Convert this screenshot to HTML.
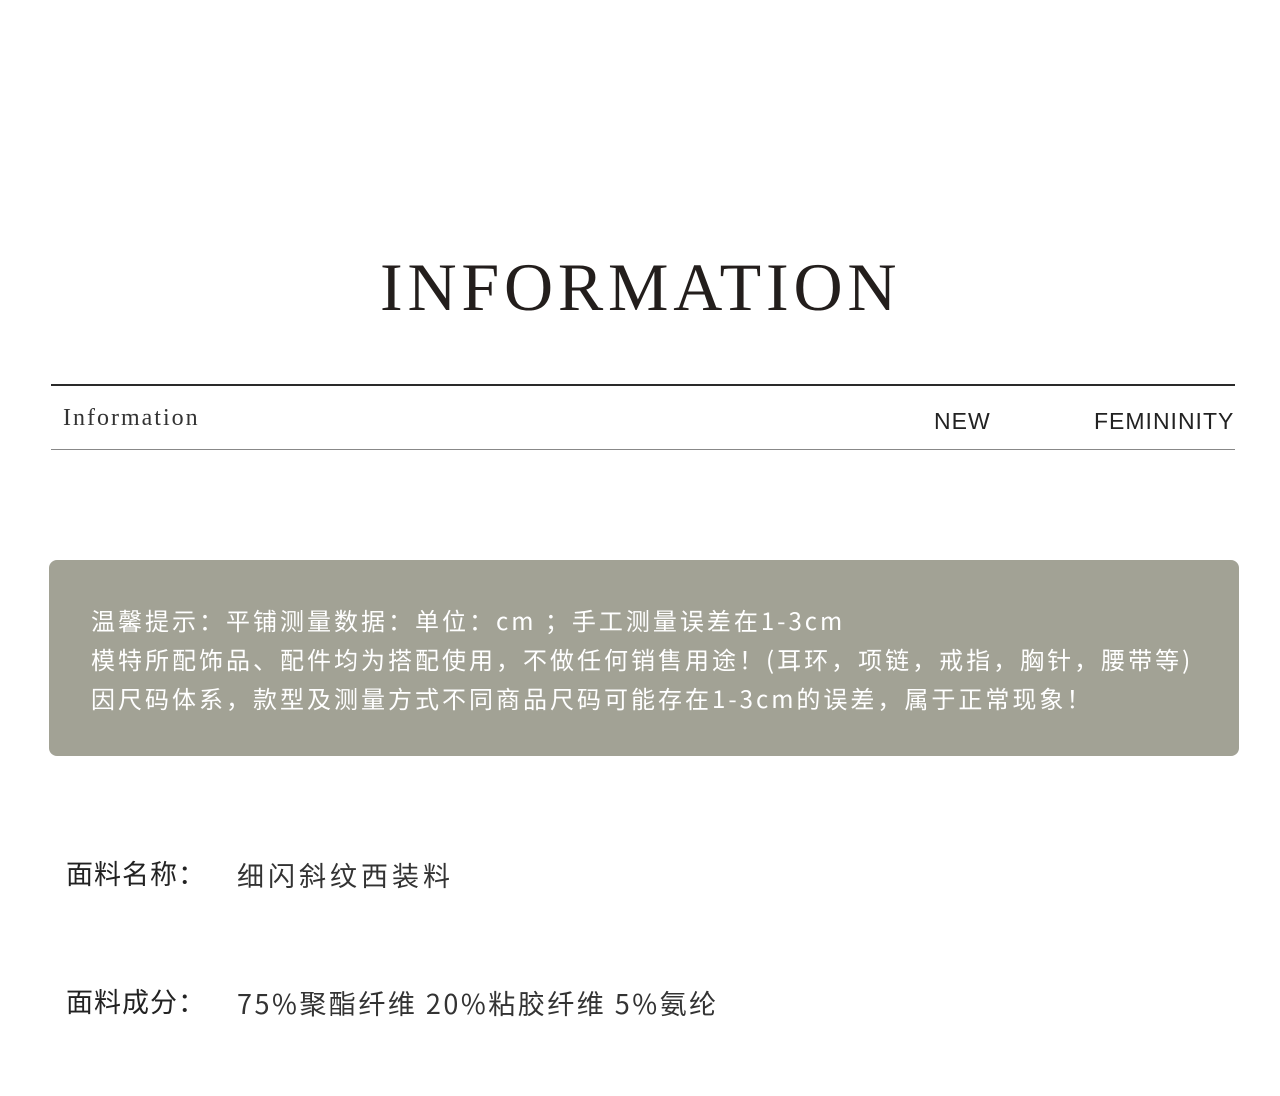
<!DOCTYPE html>
<html><head><meta charset="utf-8"><style>
html,body{margin:0;padding:0;background:#fff;width:1280px;height:1096px;overflow:hidden;position:relative}
.a{position:absolute;white-space:nowrap}
.serif{font-family:"Liberation Serif","Noto Serif CJK SC",serif}
.sans{font-family:"Liberation Sans","Noto Sans CJK SC",sans-serif}
.cjk{font-family:"Noto Sans CJK SC",sans-serif}
</style></head><body>
<div class="a serif" style="left:380px;top:248px;font-size:68px;letter-spacing:4.8px;color:#231e1c;line-height:78px">INFORMATION</div>
<div class="a" style="left:51px;top:384px;width:1184px;height:2px;background:#2a2a2a"></div>
<div class="a serif" style="left:63px;top:405px;font-size:24px;color:#333;letter-spacing:2px">Information</div>
<div class="a sans" style="left:934px;top:408px;font-size:23px;color:#222;letter-spacing:1px">NEW</div>
<div class="a sans" style="left:1094px;top:408px;font-size:23px;color:#222;letter-spacing:1px">FEMININITY</div>
<div class="a" style="left:51px;top:449px;width:1184px;height:1px;background:#888"></div>
<div class="a" style="left:49px;top:560px;width:1190px;height:196px;background:#a2a295;border-radius:8px"></div>
<div class="a cjk" style="left:91px;top:600px;font-size:24px;color:#fff;line-height:39px;letter-spacing:3px">温馨提示：平铺测量数据：单位：cm ；手工测量误差在1-3cm<br>模特所配饰品、配件均为搭配使用，不做任何销售用途！(耳环，项链，戒指，胸针，腰带等)<br>因尺码体系，款型及测量方式不同商品尺码可能存在1-3cm的误差，属于正常现象！</div>
<div class="a cjk" style="left:66px;top:853px;font-size:27px;color:#222;letter-spacing:1px">面料名称：</div>
<div class="a cjk" style="left:237px;top:855px;font-size:27px;color:#333;letter-spacing:4px">细闪斜纹西装料</div>
<div class="a cjk" style="left:66px;top:981px;font-size:27px;color:#222;letter-spacing:1px">面料成分：</div>
<div class="a cjk" style="left:237px;top:983px;font-size:27px;color:#333;letter-spacing:2.5px">75%聚酯纤维 20%粘胶纤维 5%氨纶</div>
</body></html>
